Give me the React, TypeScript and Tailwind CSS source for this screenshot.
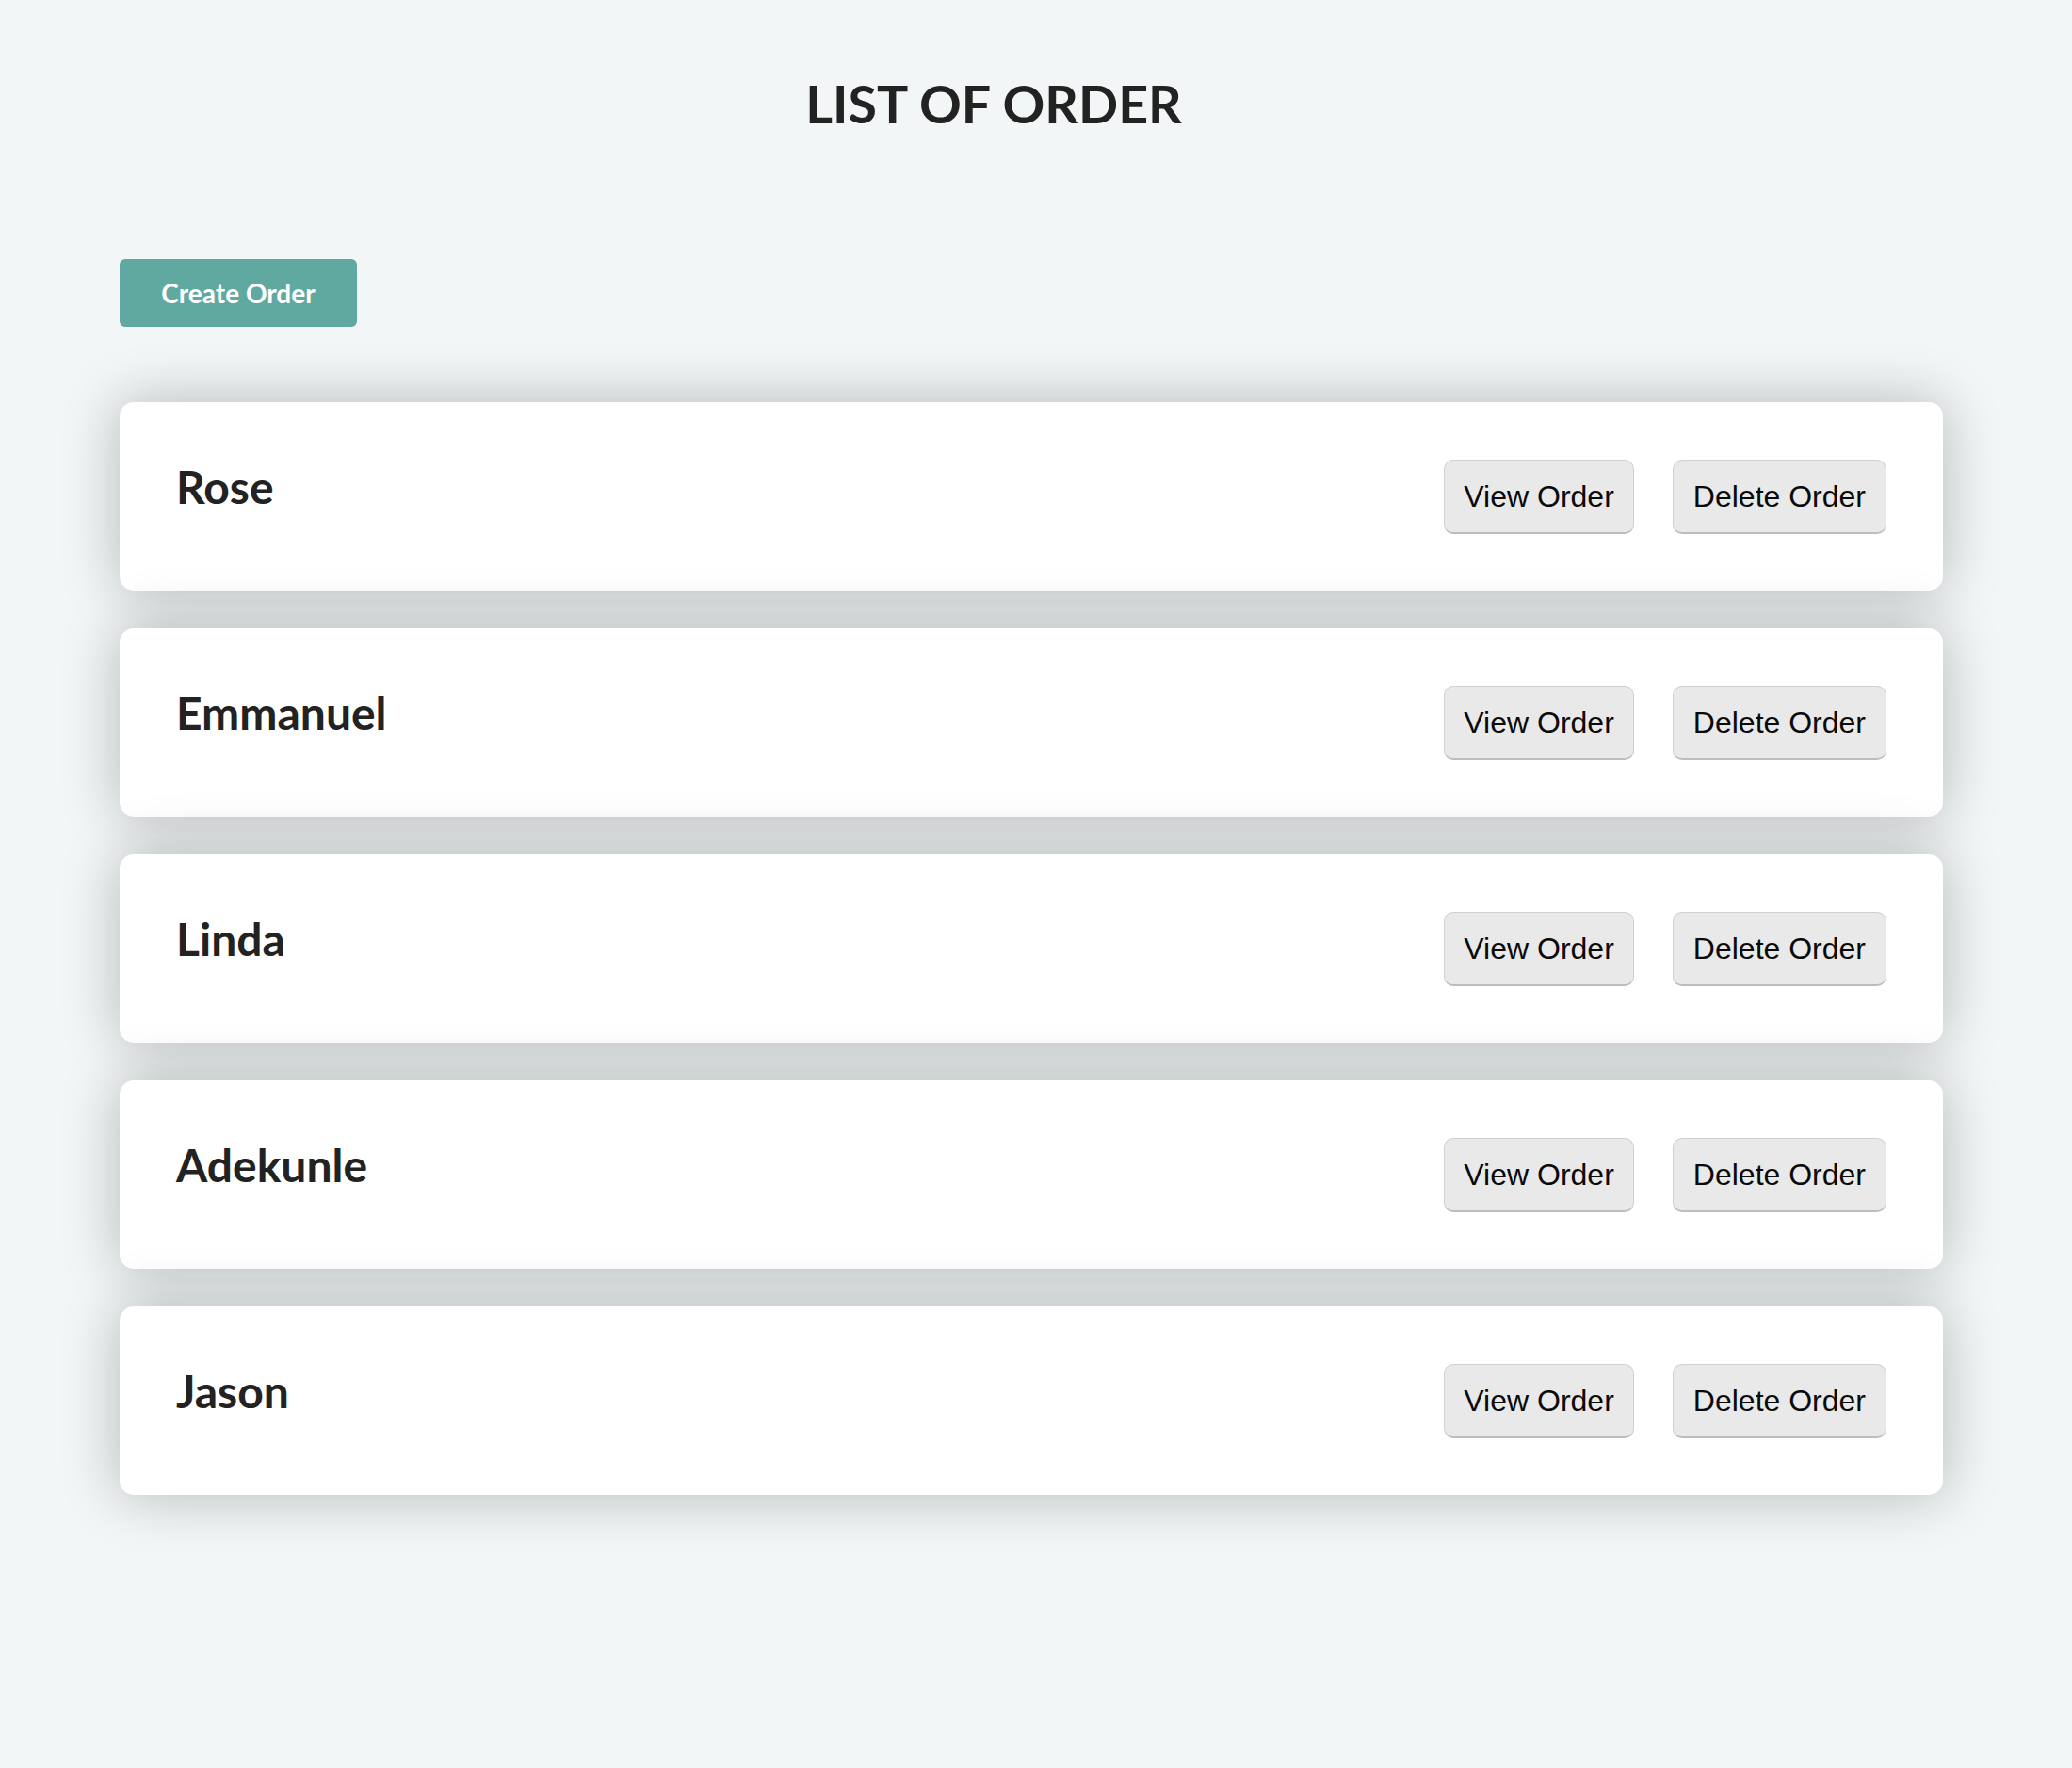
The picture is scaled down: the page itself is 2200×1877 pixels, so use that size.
import React from "react";

const orders = ["Rose", "Emmanuel", "Linda", "Adekunle", "Jason"];

interface OrderCardProps {
  name: string;
}

const OrderCard: React.FC<OrderCardProps> = ({ name }) => {
  return (
    <div className="flex items-start justify-between rounded-[15px] bg-white pt-[61px] pb-[60px] pl-[60px] pr-[60px] shadow-[0_0_60px_rgba(20,20,20,0.27)]">
      <h2 className="text-[48px] leading-[1.2] font-bold text-[#222]">{name}</h2>
      <div className="flex gap-[41px]">
        <button className="h-[79px] rounded-[10px] border border-[#d0d0d0] border-b-2 border-b-[#bdbdbd] bg-[#e9e9e9] px-[20px] font-['Liberation_Sans',Arial,sans-serif] text-[32px] text-[#0a0a0a]">
          View Order
        </button>
        <button className="h-[79px] rounded-[10px] border border-[#d0d0d0] border-b-2 border-b-[#bdbdbd] bg-[#e9e9e9] px-[21px] font-['Liberation_Sans',Arial,sans-serif] text-[32px] text-[#0a0a0a]">
          Delete Order
        </button>
      </div>
    </div>
  );
};

export default function App() {
  return (
    <div className="min-h-screen bg-[#f2f6f7] font-['Lato','Noto_Sans',sans-serif] text-[#222]">
      <div className="pr-[90px] pt-[77px] text-center">
        <h1 className="text-[55.5px] leading-[1.2] font-bold">LIST OF ORDER</h1>
      </div>

      <div className="pl-[127px] pr-[137px] pt-[131px] pb-[200px]">
        <button className="h-[72px] w-[252px] rounded-[6px] bg-[#5fa9a0] text-[28px] font-bold text-white">
          Create Order
        </button>

        <div className="mt-[80px] flex flex-col gap-[40px]">
          {orders.map((name) => (
            <OrderCard key={name} name={name} />
          ))}
        </div>
      </div>
    </div>
  );
}
